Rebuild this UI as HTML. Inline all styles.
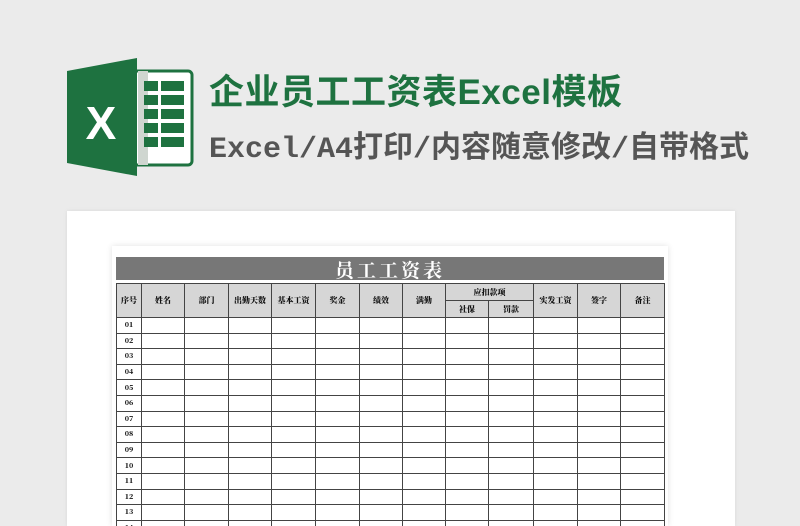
<!DOCTYPE html>
<html style="height:526px;overflow:hidden"><head><meta charset="utf-8"><style>
body{margin:0;width:800px;height:526px;background:#ebebeb;position:relative;overflow:hidden;font-family:"Liberation Sans","Noto Sans CJK SC",sans-serif}
.abs{position:absolute}
#t1{left:209px;top:71px;font-size:35px;font-weight:bold;color:#1e7240;white-space:nowrap;line-height:44px;letter-spacing:0.5px}
#t2{left:209px;top:131px;font-size:30px;color:#555;white-space:nowrap;line-height:38px;font-family:"Liberation Mono","Noto Sans CJK SC",monospace;font-weight:bold}
#card{left:67px;top:211px;width:668px;height:315px;background:#fff;box-shadow:0 0 4px rgba(0,0,0,.08)}
#sheet{left:112px;top:246px;width:556px;height:280px;background:#fff;box-shadow:0 0 6px rgba(0,0,0,.12)}
#bar{left:116px;top:257px;width:548px;height:23px;background:#777;color:#fff;font-family:"Noto Serif CJK SC",serif;font-weight:bold;font-size:19px;line-height:26px;text-align:center;letter-spacing:3px}
table{position:absolute;left:116px;top:283px;border-collapse:collapse;font-family:"Noto Serif CJK SC",serif;font-size:8px;font-weight:900;color:#111}
td{border:1.4px solid #444;padding:0;text-align:center}
thead td{background:#d6d6d6;height:16px}
tbody td{height:14.6px;font-size:7px}
</style></head><body>
<svg class="abs" style="left:66px;top:57px" width="130" height="120" viewBox="0 0 130 120">
<rect x="60" y="14" width="66" height="94" rx="4" fill="#fff" stroke="#1e7240" stroke-width="3"/>
<rect x="72" y="14" width="10" height="94" fill="#cfd6d0"/>
<g fill="#1e7240">
<rect x="78" y="24" width="14" height="10"/><rect x="95" y="24" width="23" height="10"/>
<rect x="78" y="38" width="14" height="10"/><rect x="95" y="38" width="23" height="10"/>
<rect x="78" y="52" width="14" height="10"/><rect x="95" y="52" width="23" height="10"/>
<rect x="78" y="66" width="14" height="10"/><rect x="95" y="66" width="23" height="10"/>
<rect x="78" y="80" width="14" height="10"/><rect x="95" y="80" width="23" height="10"/>
</g>
<polygon points="1,14 71,1 71,119 1,106" fill="#1e7240"/>
<text x="35" y="82" font-family="Liberation Sans" font-weight="bold" font-size="46" fill="#fff" text-anchor="middle">X</text>
</svg>
<div id="t1" class="abs">企业员工工资表Excel模板</div>
<div id="t2" class="abs">Excel/A4打印/内容随意修改/自带格式</div>
<div id="card" class="abs"></div>
<div id="sheet" class="abs"></div>
<div id="bar" class="abs">员工工资表</div>
<table>
<colgroup><col style="width:25px"><col style="width:43px"><col style="width:44px"><col style="width:43px"><col style="width:44px"><col style="width:44px"><col style="width:43px"><col style="width:43px"><col style="width:43px"><col style="width:45px"><col style="width:44px"><col style="width:43px"><col style="width:44px"></colgroup>
<thead>
<tr><td rowspan="2">序号</td><td rowspan="2">姓名</td><td rowspan="2">部门</td><td rowspan="2">出勤天数</td><td rowspan="2">基本工资</td><td rowspan="2">奖金</td><td rowspan="2">绩效</td><td rowspan="2">满勤</td><td colspan="2">应扣款项</td><td rowspan="2">实发工资</td><td rowspan="2">签字</td><td rowspan="2">备注</td></tr>
<tr><td>社保</td><td>罚款</td></tr>
</thead>
<tbody>
<tr><td>01</td><td></td><td></td><td></td><td></td><td></td><td></td><td></td><td></td><td></td><td></td><td></td><td></td></tr>
<tr><td>02</td><td></td><td></td><td></td><td></td><td></td><td></td><td></td><td></td><td></td><td></td><td></td><td></td></tr>
<tr><td>03</td><td></td><td></td><td></td><td></td><td></td><td></td><td></td><td></td><td></td><td></td><td></td><td></td></tr>
<tr><td>04</td><td></td><td></td><td></td><td></td><td></td><td></td><td></td><td></td><td></td><td></td><td></td><td></td></tr>
<tr><td>05</td><td></td><td></td><td></td><td></td><td></td><td></td><td></td><td></td><td></td><td></td><td></td><td></td></tr>
<tr><td>06</td><td></td><td></td><td></td><td></td><td></td><td></td><td></td><td></td><td></td><td></td><td></td><td></td></tr>
<tr><td>07</td><td></td><td></td><td></td><td></td><td></td><td></td><td></td><td></td><td></td><td></td><td></td><td></td></tr>
<tr><td>08</td><td></td><td></td><td></td><td></td><td></td><td></td><td></td><td></td><td></td><td></td><td></td><td></td></tr>
<tr><td>09</td><td></td><td></td><td></td><td></td><td></td><td></td><td></td><td></td><td></td><td></td><td></td><td></td></tr>
<tr><td>10</td><td></td><td></td><td></td><td></td><td></td><td></td><td></td><td></td><td></td><td></td><td></td><td></td></tr>
<tr><td>11</td><td></td><td></td><td></td><td></td><td></td><td></td><td></td><td></td><td></td><td></td><td></td><td></td></tr>
<tr><td>12</td><td></td><td></td><td></td><td></td><td></td><td></td><td></td><td></td><td></td><td></td><td></td><td></td></tr>
<tr><td>13</td><td></td><td></td><td></td><td></td><td></td><td></td><td></td><td></td><td></td><td></td><td></td><td></td></tr>
<tr><td>14</td><td></td><td></td><td></td><td></td><td></td><td></td><td></td><td></td><td></td><td></td><td></td><td></td></tr>
</tbody>
</table>
</body></html>
